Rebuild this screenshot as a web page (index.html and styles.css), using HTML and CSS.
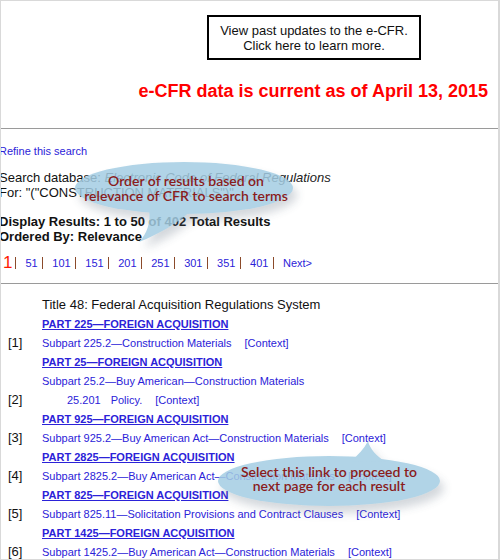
FILE: index.html
```html
<!DOCTYPE html>
<html lang="en">
<head>
  <meta charset="UTF-8">
  <title>e-CFR Search Results</title>
  <link rel="stylesheet" href="styles.css">
</head>
<body>
  <div class="frame">
    <div class="top">
      <a class="updates-box">View past updates to the e-CFR.<br>Click here to learn more.</a>
      <h2 class="current">e-CFR data is current as of April 13, 2015</h2>
    </div>
    <hr class="rule">

    <div class="search-info">
      <a class="refine">Refine this search</a>
      <p class="db">Search database: <em>Electronic Code of Federal Regulations</em><br>For: "("CONSTRUCTION MATERIALS")"</p>
      <p class="display">Display Results: 1 to 50 of 402 Total Results<br>Ordered By: Relevance</p>
      <div class="pages">
        <span class="current-page">1</span>
        <span class="sep"></span><a>51</a>
        <span class="sep"></span><a>101</a>
        <span class="sep"></span><a>151</a>
        <span class="sep"></span><a>201</a>
        <span class="sep"></span><a>251</a>
        <span class="sep"></span><a>301</a>
        <span class="sep"></span><a>351</a>
        <span class="sep"></span><a>401</a>
        <span class="sep"></span><a>Next&gt;</a>
      </div>
    </div>
    <hr class="rule">

    <div class="results">
      <span></span><span class="title">Title 48: Federal Acquisition Regulations System</span>

      <span></span><a class="part">PART 225—FOREIGN ACQUISITION</a>
      <span class="num">[1]</span><span class="sub"><a>Subpart 225.2—Construction Materials</a><a class="ctx">[Context]</a></span>

      <span></span><a class="part">PART 25—FOREIGN ACQUISITION</a>
      <span></span><span class="sub"><a>Subpart 25.2—Buy American—Construction Materials</a></span>
      <span class="num">[2]</span><span class="sub section"><a>25.201</a><a class="policy">Policy.</a><a class="ctx">[Context]</a></span>

      <span></span><a class="part">PART 925—FOREIGN ACQUISITION</a>
      <span class="num">[3]</span><span class="sub"><a>Subpart 925.2—Buy American Act—Construction Materials</a><a class="ctx">[Context]</a></span>

      <span></span><a class="part">PART 2825—FOREIGN ACQUISITION</a>
      <span class="num">[4]</span><span class="sub"><a>Subpart 2825.2—Buy American Act—Construction Materials</a><a class="ctx">[Context]</a></span>

      <span></span><a class="part">PART 825—FOREIGN ACQUISITION</a>
      <span class="num">[5]</span><span class="sub"><a>Subpart 825.11—Solicitation Provisions and Contract Clauses</a><a class="ctx">[Context]</a></span>

      <span></span><a class="part">PART 1425—FOREIGN ACQUISITION</a>
      <span class="num">[6]</span><span class="sub"><a>Subpart 1425.2—Buy American Act—Construction Materials</a><a class="ctx">[Context]</a></span>
    </div>

    <!-- help callouts -->
    <div class="callout callout-order">
      <svg width="240" height="100" viewBox="0 0 240 100">
        <defs>
          <filter id="soft1" x="-20%" y="-40%" width="140%" height="180%">
            <feDropShadow dx="4" dy="7" stdDeviation="5" flood-color="#6a7a88" flood-opacity="0.35"/>
          </filter>
        </defs>
        <g filter="url(#soft1)" fill="#a4cde3" opacity="0.85">
          <ellipse cx="113" cy="32" rx="109" ry="26"/>
          <path d="M78 54 C80 66 76 78 68 86 C88 78 105 68 120 55 Z"/>
        </g>
      </svg>
      <span class="callout-text">Order of results based on<br>relevance of CFR to search terms</span>
    </div>

    <div class="callout callout-next">
      <svg width="250" height="100" viewBox="0 0 250 100">
        <defs>
          <filter id="soft2" x="-20%" y="-40%" width="140%" height="180%">
            <feDropShadow dx="4" dy="7" stdDeviation="5" flood-color="#6a7a88" flood-opacity="0.35"/>
          </filter>
        </defs>
        <g filter="url(#soft2)" fill="#a4cde3" opacity="0.85">
          <ellipse cx="123" cy="50" rx="111" ry="25"/>
          <path d="M145 30 C152 24 158 18 162 10 C164 18 170 25 180 31 Z"/>
        </g>
      </svg>
      <span class="callout-text">Select this link to proceed to<br>next page for each result</span>
    </div>
  </div>
</body>
</html>
```

FILE: styles.css
```css
body {
  margin: 0;
  font-family: Arial, "Liberation Sans", sans-serif;
  background-color: #fff;
}
a {
  color: #2b22d8;
  cursor: pointer;
}
.frame {
  position: relative;
  width: 497px;
  height: 558px;
  border: 1px solid #d9d9d9;
  border-right-width: 2px;
  overflow: hidden;
}
.top {
  height: 127px;
  display: flex;
  flex-direction: column;
  align-items: flex-end;
}
.updates-box {
  box-sizing: border-box;
  width: 214px;
  margin: 14px 77px 0 0;
  padding: 6px 0 5px;
  border: 2px solid #000;
  color: #111;
  font-size: 13px;
  line-height: 15px;
  text-align: center;
}
.current {
  margin: 20px 10px 0 0;
  color: #ff0000;
  font-size: 18px;
  line-height: 22px;
}
.rule {
  margin: 0;
  border: 0;
  border-top: 1px solid #9a9a9a;
}
.search-info {
  margin-left: -2px;
  padding: 15px 0 12px;
}
.refine {
  display: block;
  font-size: 11px;
  line-height: 14px;
}
.db {
  margin: 12px 0 0;
  font-size: 13px;
  line-height: 15px;
  color: #111;
}
.db em {
  color: #222;
}
.display {
  margin: 14px 0 0;
  font-size: 13px;
  line-height: 15px;
  font-weight: bold;
  color: #111;
}
.pages {
  display: flex;
  align-items: center;
  height: 16px;
  margin-top: 11px;
  padding-left: 4px;
  font-size: 11px;
}
.current-page {
  color: #ff1a00;
  font-size: 17px;
  margin-right: 3px;
}
.sep {
  width: 1px;
  height: 12px;
  margin-right: 9px;
  background-color: #8b4a2a;
}
.pages a {
  margin-right: 4.6px;
}
.results {
  display: grid;
  grid-template-columns: 41px 1fr;
  grid-auto-rows: 19px;
  align-items: center;
  padding-top: 11px;
}
.title {
  font-size: 13px;
  color: #111;
}
.part {
  font-size: 11px;
  font-weight: bold;
  text-decoration: underline;
}
.num {
  padding-left: 7px;
  font-size: 13px;
  color: #111;
}
.sub {
  display: flex;
  font-size: 11px;
}
.sub .ctx {
  margin-left: 13px;
}
.section {
  padding-left: 25px;
}
.section .policy {
  margin-left: 10px;
}
.callout {
  position: absolute;
}
.callout svg {
  display: block;
}
.callout-text {
  position: absolute;
  left: 0;
  color: #8a1c1c;
  font-family: Lato, "DejaVu Sans", sans-serif;
  font-size: 14px;
  font-weight: 600;
  line-height: 15px;
  text-align: center;
}
.callout-order {
  left: 70px;
  top: 155px;
}
.callout-order .callout-text {
  top: 17px;
  width: 230px;
}
.callout-next {
  left: 205px;
  top: 430px;
}
.callout-next .callout-text {
  top: 34px;
  width: 246px;
  line-height: 14px;
}
```
